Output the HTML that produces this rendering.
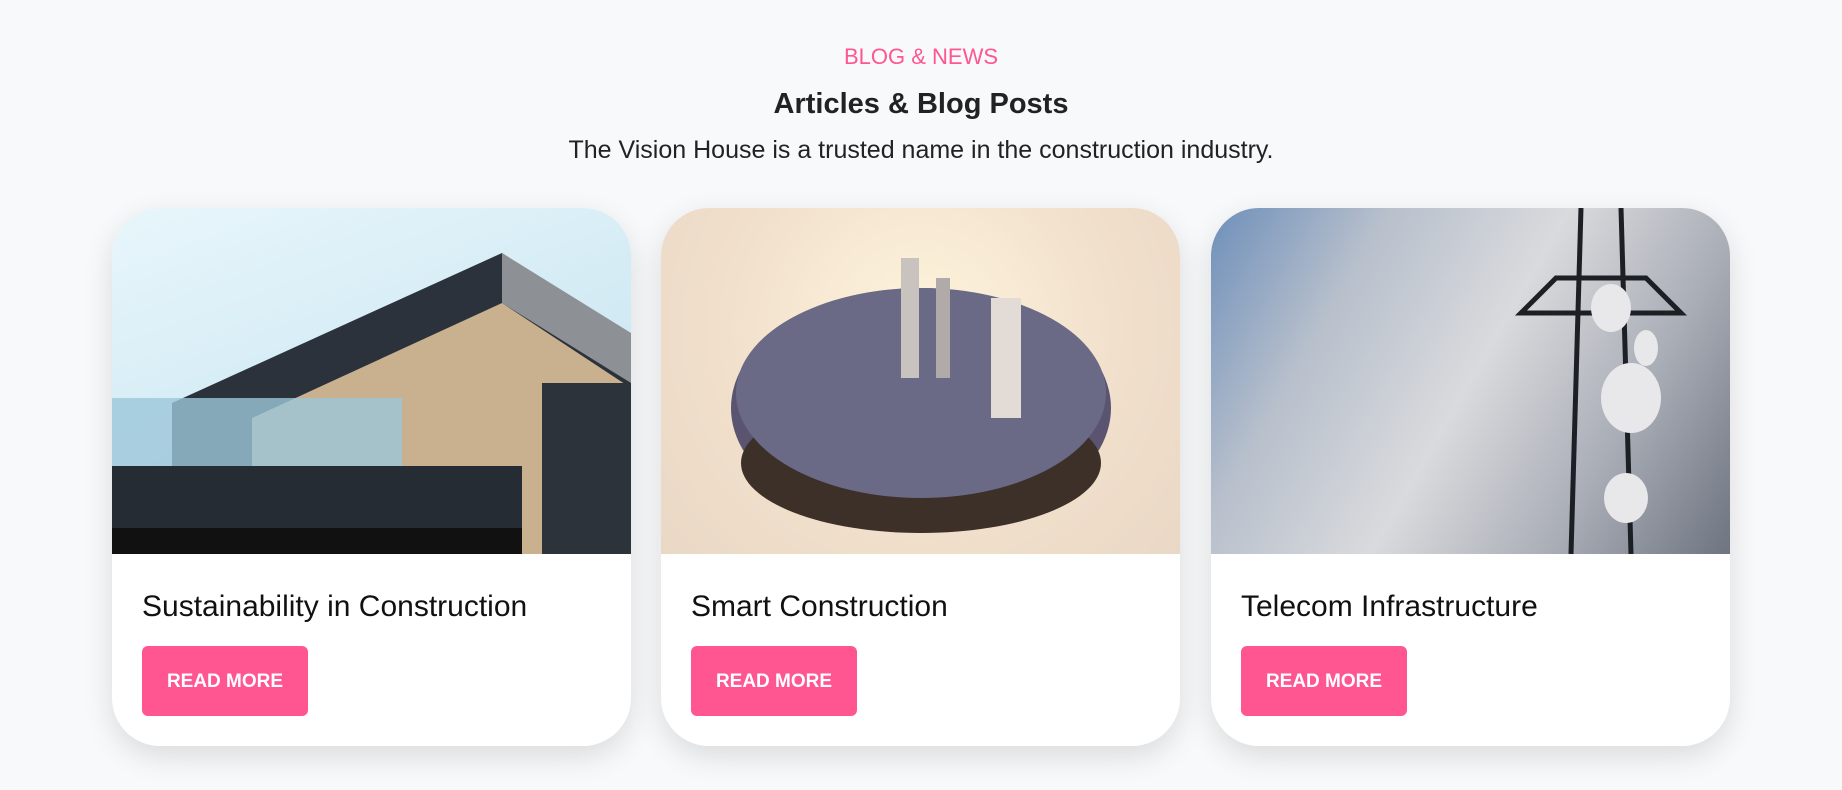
<!DOCTYPE html>
<html><head><meta charset="utf-8"><style>
*{margin:0;padding:0;box-sizing:border-box}
body{width:1842px;height:790px;background:#f8f9fa;font-family:"Liberation Sans",sans-serif;position:relative;overflow:hidden}
.c{position:absolute;left:0;width:1842px;text-align:center}
.card{position:absolute;top:208px;width:519px;height:538px;background:#fff;border-radius:48px;overflow:hidden;box-shadow:0 10px 30px rgba(0,0,0,.12)}
.img{height:346px;position:relative;overflow:hidden}
.t{position:absolute;left:30px;top:382px;font-size:30px;color:#111}
.b{position:absolute;left:30px;top:438px;width:166px;height:70px;background:#ff5590;border-radius:6px;color:#fff;font-size:19px;font-weight:bold;line-height:72px;text-align:center}
</style></head><body>
<div class="c" style="top:44px;font-size:22px;color:#ff5590">BLOG &amp; NEWS</div>
<div class="c" style="top:88px;font-size:29px;font-weight:bold;color:#222">Articles &amp; Blog Posts</div>
<div class="c" style="top:136px;font-size:25px;color:#222">The Vision House is a trusted name in the construction industry.</div>

<div class="card" style="left:112px"><div class="img" style="background:linear-gradient(160deg,#e8f6fb,#bfe0ee)">
<svg width="519" height="346" style="position:absolute;left:0;top:0">
<polygon points="60,195 390,45 519,130 519,346 60,346" fill="#2b323b"/>
<polygon points="390,45 519,125 519,175 390,95" fill="#8d9095"/>
<polygon points="140,210 390,95 519,180 519,346 140,346" fill="#c9b08e"/>
<rect x="0" y="190" width="290" height="70" fill="#9cc7d9" opacity=".8"/>
<rect x="0" y="258" width="410" height="88" fill="#262c33"/>
<rect x="430" y="175" width="89" height="171" fill="#2d333a"/>
<rect x="0" y="320" width="410" height="26" fill="#111"/>
</svg></div><div class="t">Sustainability in Construction</div><div class="b">READ MORE</div></div>

<div class="card" style="left:661px"><div class="img" style="background:radial-gradient(circle at 50% 35%,#fff4dc,#f0dfcb 60%,#ead8c6)">
<svg width="519" height="346" style="position:absolute;left:0;top:0">
<ellipse cx="260" cy="200" rx="190" ry="120" fill="#5b5470"/>
<ellipse cx="260" cy="255" rx="180" ry="70" fill="#3d3028"/>
<ellipse cx="260" cy="185" rx="185" ry="105" fill="#6a6a86"/>
<rect x="240" y="50" width="18" height="120" fill="#c9c3c0"/><rect x="330" y="90" width="30" height="120" fill="#e3dcd6"/><rect x="275" y="70" width="14" height="100" fill="#b0aaa8"/>
</svg></div><div class="t">Smart Construction</div><div class="b">READ MORE</div></div>

<div class="card" style="left:1211px"><div class="img" style="background:linear-gradient(120deg,#6e8fba 0%,#b8c0cc 25%,#d9dadd 50%,#a9adb6 75%,#6e7480 100%)">
<svg width="519" height="346" style="position:absolute;left:0;top:0">
<g stroke="#1c1f24" stroke-width="5" fill="none"><line x1="370" y1="0" x2="360" y2="346"/><line x1="410" y1="0" x2="420" y2="346"/><polygon points="345,70 435,70 470,105 310,105"/></g>
<g fill="#e8e8ea"><ellipse cx="400" cy="100" rx="20" ry="24"/><ellipse cx="420" cy="190" rx="30" ry="35"/><ellipse cx="415" cy="290" rx="22" ry="25"/><ellipse cx="435" cy="140" rx="12" ry="18"/></g>
</svg></div><div class="t">Telecom Infrastructure</div><div class="b">READ MORE</div></div>
</body></html>
